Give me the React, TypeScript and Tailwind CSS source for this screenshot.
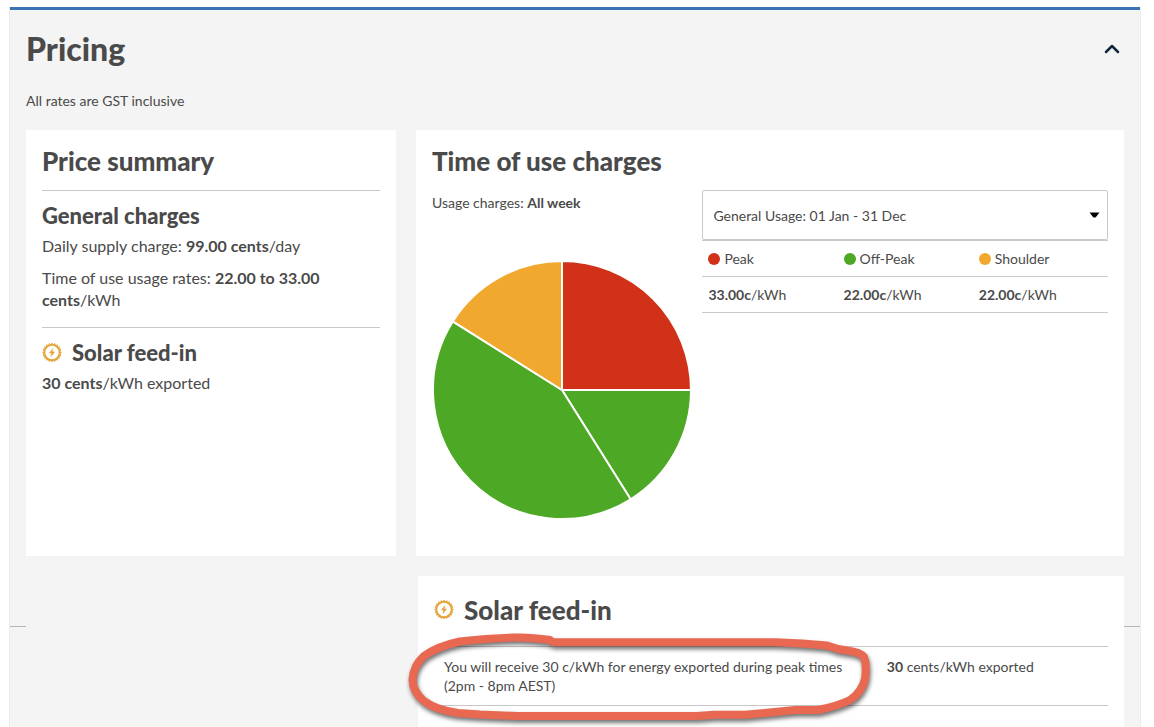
import React, { useState } from "react";
import { ChevronUp } from "lucide-react";

type Period = "peak" | "offPeak" | "shoulder";

const rates: { key: Period; label: string; price: string; dot: string }[] = [
  { key: "peak", label: "Peak", price: "33.00c", dot: "bg-[#d03118]" },
  { key: "offPeak", label: "Off-Peak", price: "22.00c", dot: "bg-[#4da825]" },
  { key: "shoulder", label: "Shoulder", price: "22.00c", dot: "bg-[#f1a82e]" },
];

const fills: Record<Period, string> = {
  peak: "#d03118",
  offPeak: "#4da825",
  shoulder: "#f1a82e",
};

// hours of the week in each slice, clockwise from the top
const slices: { period: Period; hours: number }[] = [
  { period: "peak", hours: 42 },
  { period: "offPeak", hours: 27 },
  { period: "offPeak", hours: 72 },
  { period: "shoulder", hours: 27 },
];

const SolarIcon = () => {
  const teeth = Array.from({ length: 20 }, (_, i) => i * 18);
  return (
    <svg className="h-5 w-5 shrink-0" viewBox="0 0 20 20" aria-hidden="true">
      <g fill="none" stroke="#e3a63c">
        <circle cx="10" cy="9.5" r="7.7" strokeWidth="2" />
        {teeth.map((deg) => (
          <path
            key={deg}
            d="M10 0v1.500"
            strokeWidth="1.5"
            transform={`rotate(${deg} 10 9.5)`}
          />
        ))}
      </g>
      <path d="M11.4 5 6.800 10.300h2.600L8.600 14.200 13.200 8.800h-2.600z" fill="#e3a63c" />
    </svg>
  );
};

const UsagePie = () => {
  const total = slices.reduce((sum, s) => sum + s.hours, 0);
  const point = (hours: number) => {
    const angle = (hours / total) * Math.PI * 2;
    return `${130 + 129 * Math.sin(angle)} ${130 - 129 * Math.cos(angle)}`;
  };
  let start = 0;
  return (
    <svg
      className="mt-[47px] h-[260px] w-[260px]"
      viewBox="0 0 260 260"
      role="img"
      aria-label="Time of use"
    >
      {slices.map((slice, i) => {
        const from = start;
        start += slice.hours;
        return (
          <path
            key={i}
            d={`M130 130L${point(from)}A129 129 0 0 1 ${point(start)}Z`}
            fill={fills[slice.period]}
            stroke="#fff"
            strokeWidth="2"
            strokeLinejoin="round"
          />
        );
      })}
    </svg>
  );
};

const PriceSummary = () => (
  <section className="bg-white px-4 pt-4">
    <h2 className="border-b border-[#c8c8c8] pb-[14px] text-[26px] leading-[30px] font-black">
      Price summary
    </h2>
    <h3 className="mt-3 text-[22px] leading-[26px] font-black">
      General charges
    </h3>
    <p className="mt-[6px] text-base leading-[22px]">
      Daily supply charge: <b>99.00 cents</b>/day
    </p>
    <p className="mt-[10px] border-b border-[#c8c8c8] pb-4 text-base leading-[22px]">
      Time of use usage rates: <b>22.00 to 33.00</b> <b>cents</b>/kWh
    </p>
    <div className="mt-3 flex items-center gap-[10px]">
      <SolarIcon />
      <h3 className="text-[22px] leading-[26px] font-black">Solar feed-in</h3>
    </div>
    <p className="mt-[6px] text-base leading-[22px]">
      <b>30 cents</b>/kWh exported
    </p>
  </section>
);

const TimeOfUse = () => (
  <section className="bg-white px-4 pt-4 pb-9">
    <h2 className="pb-[14px] text-[26px] leading-[30px] font-black">
      Time of use charges
    </h2>
    <div className="flex">
      <div className="w-2/5 pt-[3px]">
        <p className="text-sm">
          Usage charges: <b>All week</b>
        </p>
        <UsagePie />
      </div>
      <div className="w-3/5">
        <div className="relative">
          <select
            aria-label="Usage period"
            className="h-[50px] w-full appearance-none rounded-xs border border-[#c8cacb] bg-white px-[10px] pt-[2px] text-sm"
          >
            <option>General Usage: 01 Jan - 31 Dec</option>
          </select>
          <svg
            className="pointer-events-none absolute top-[22px] right-2 h-[6px] w-[11px]"
            viewBox="0 0 11 6"
            aria-hidden="true"
          >
            <path d="M.5.5h10L7 5q-1.500 1-3 0z" fill="#000" />
          </svg>
        </div>
        <table className="w-full table-fixed border-collapse border-y border-[#c8cacb] text-left text-sm">
          <thead>
            <tr className="h-9 border-b border-[#c8cacb]">
              {rates.map((rate) => (
                <th key={rate.key} scope="col" className="px-[6px] font-normal">
                  <span className="flex items-center gap-1">
                    <span className={`h-3 w-3 rounded-full ${rate.dot}`} />
                    {rate.label}
                  </span>
                </th>
              ))}
            </tr>
          </thead>
          <tbody>
            <tr className="h-9">
              {rates.map((rate) => (
                <td key={rate.key} className="px-[6px]">
                  <b>{rate.price}</b>/kWh
                </td>
              ))}
            </tr>
          </tbody>
        </table>
      </div>
    </div>
  </section>
);

// hand drawn marker around the peak feed-in note
const Marker = () => (
  <svg
    className="pointer-events-none absolute -top-4 -left-[34px] h-[97px] w-[480px]"
    viewBox="400 630 480 97"
    aria-hidden="true"
  >
    <path
      d="M553 643L550 640Q530 637 515 637.500Q485 638.500 460 641.500Q438 646 424 656Q413 666 412.500 680Q413 692 424 701Q436 710 458 713L480 714.500L518 716H697L714 714.800H745L765 713L795 710H818Q838 706 850 700Q862 692 865 679Q867 665 864 657Q860 652 847 650.500L838 649L827 645.500L802 643.500L775 642.300H552"
      fill="none"
      stroke="#e96852"
      strokeWidth="8"
      strokeLinejoin="round"
      className="drop-shadow-[1px_3px_2px_rgba(0,0,0,0.55)]"
    />
  </svg>
);

const SolarFeedIn = () => (
  <section className="ml-[2px] bg-white px-4 pt-[19px] pb-[21px]">
    <div className="flex items-center gap-[10px] pb-[21px]">
      <SolarIcon />
      <h2 className="text-[26px] leading-[30px] font-black">Solar feed-in</h2>
    </div>
    <div className="relative">
      <table className="w-full table-fixed border-collapse border-y border-[#c8c8c8] text-sm leading-[19px]">
        <tbody>
          <tr className="align-top">
            <td className="w-[66%] p-[10px]">
              You will receive 30 c/kWh for energy exported during peak times
              (2pm - 8pm AEST)
            </td>
            <td className="py-[10px] px-2">
              <b>30</b> cents/kWh exported
            </td>
          </tr>
        </tbody>
      </table>
      <Marker />
    </div>
  </section>
);

const App = () => {
  const [open, setOpen] = useState(true);

  return (
    <main className="flex min-h-screen flex-col bg-white pt-[7px] pr-[13px] pl-[9px] font-[Lato,sans-serif] text-[#4a4a4a]">
      <div className="flex-1 border-x border-[#ebebeb] bg-[#f4f4f4]">
        <div className="border-t-[3px] border-[#3b73b5] px-4">
          <h1 className="pt-[19px]">
            <button
              type="button"
              aria-expanded={open}
              onClick={() => setOpen(!open)}
              className="flex w-full cursor-pointer items-center justify-between text-left text-[32px] leading-10 font-black"
            >
              Pricing
              <ChevronUp
                className={`h-6 w-6 text-[#14283c] ${open ? "" : "rotate-180"}`}
                strokeWidth={2.5}
              />
            </button>
          </h1>
          {open && (
            <>
              <p className="mt-[22px] text-sm">All rates are GST inclusive</p>
              <div className="mt-[19px] grid grid-cols-[370fr_708fr] gap-5">
                <PriceSummary />
                <TimeOfUse />
              </div>
              <div className="-mx-4 mt-5 flex">
                <span className="mt-[50px] h-px w-4 bg-[#b5b5b5]" />
                <div className="grid flex-1 grid-cols-[370fr_708fr] gap-5">
                  <div />
                  <SolarFeedIn />
                </div>
                <span className="mt-[50px] h-px w-4 bg-[#b5b5b5]" />
              </div>
            </>
          )}
        </div>
      </div>
    </main>
  );
};

export default App;
